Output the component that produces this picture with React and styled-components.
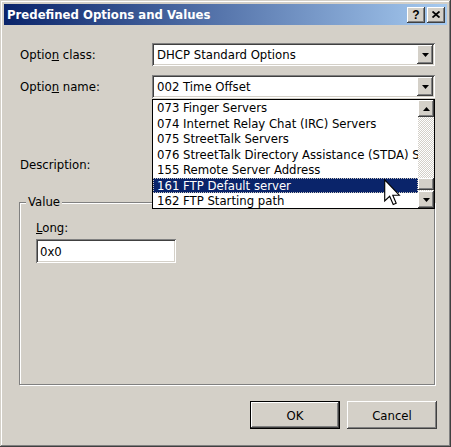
import React from "react";
import styled, { createGlobalStyle, css } from "styled-components";

const GlobalStyle = createGlobalStyle`
  html, body {
    margin: 0;
    padding: 0;
    background: #d4d0c8;
  }
  body {
    font-family: "DejaVu Sans Condensed", "DejaVu Sans", sans-serif;
    font-stretch: condensed;
    font-size: 13px;
    color: #000;
  }
`;

const raised = css`
  background: #d4d0c8;
  box-shadow: inset -1px -1px #404040, inset 1px 1px #ffffff,
    inset -2px -2px #808080, inset 2px 2px #d4d0c8;
`;

const sunken = css`
  box-shadow: inset 1px 1px #808080, inset -1px -1px #ffffff,
    inset 2px 2px #404040, inset -2px -2px #d4d0c8;
`;

const Window = styled.div`
  width: 451px;
  height: 447px;
  box-sizing: border-box;
  padding: 4px;
  display: flex;
  flex-direction: column;
  background: #d4d0c8;
  box-shadow: inset -1px -1px #404040, inset 1px 1px #d4d0c8,
    inset -2px -2px #808080, inset 2px 2px #ffffff;
`;

const TitleBar = styled.div`
  height: 21px;
  display: flex;
  align-items: center;
  padding: 0 2px 0 3px;
  background: linear-gradient(to right, #0a246a, #a6caf0);
  color: #fff;
  font-weight: bold;
  font-size: 13px;
`;

const TitleButtons = styled.div`
  margin-left: auto;
  display: flex;
  gap: 2px;
`;

const TitleButton = styled.div`
  ${raised};
  width: 18px;
  height: 16px;
  display: flex;
  align-items: center;
  justify-content: center;
  color: #000;
  font-family: "Liberation Sans", sans-serif;
  font-weight: bold;
  font-size: 12px;
  line-height: 1;
`;

const Body = styled.div`
  position: relative;
  flex: 1;
  display: flex;
  flex-direction: column;
  padding: 18px 10px 0 16px;
`;

const FieldGrid = styled.div`
  display: grid;
  grid-template-columns: 132px 283px;
  row-gap: 9px;
  align-items: center;
`;

const Label = styled.div`
  line-height: 16px;
  white-space: nowrap;
  margin-top: ${(p) => p.$offset || 0}px;
`;

const Combo = styled.div`
  ${sunken};
  background: #fff;
  height: 23px;
  box-sizing: border-box;
  padding: 2px;
  display: flex;
  align-items: center;
`;

const ComboText = styled.div`
  flex: 1;
  padding-left: 3px;
  white-space: nowrap;
  overflow: hidden;
`;

const ArrowButton = styled.div`
  ${raised};
  width: 16px;
  height: ${(p) => p.$h || 19}px;
  flex-shrink: 0;
  display: flex;
  align-items: center;
  justify-content: center;
`;

const DropList = styled.div`
  position: absolute;
  top: 74px;
  left: 148px;
  width: 283px;
  height: 110px;
  box-sizing: border-box;
  border: 1px solid #000;
  background: #fff;
  display: flex;
`;

const Items = styled.div`
  flex: 1;
  overflow: hidden;
`;

const Item = styled.div`
  height: 15.5px;
  line-height: 15.5px;
  padding-left: 4px;
  white-space: nowrap;
  overflow: hidden;
  ${(p) =>
    p.$selected &&
    css`
      background: #0a246a;
      color: #fff;
      outline: 1px dotted #c8c4bc;
      outline-offset: -1px;
    `}
`;

const ScrollBar = styled.div`
  width: 16px;
  display: flex;
  flex-direction: column;
`;

const Track = styled.div`
  flex: 1;
  display: flex;
  flex-direction: column;
  justify-content: flex-end;
  padding-bottom: 1px;
  background: repeating-conic-gradient(#ffffff 0 25%, #d4d0c8 0 50%) 0 0 / 2px
    2px;
`;

const Thumb = styled.div`
  ${raised};
  height: 12px;
`;

const Group = styled.div`
  position: relative;
  margin: 29px 0 0 -1px;
  width: 416px;
  height: 183px;
  box-sizing: border-box;
  border: 1px solid #808080;
  box-shadow: 1px 1px 0 #ffffff, inset 1px 1px 0 #ffffff;
  padding: 17px 16px;
`;

const Legend = styled.span`
  position: absolute;
  top: -9px;
  left: 6px;
  padding: 0 2px;
  line-height: 16px;
  background: #d4d0c8;
`;

const TextBox = styled.div`
  ${sunken};
  background: #fff;
  width: 140px;
  height: 24px;
  box-sizing: border-box;
  margin-top: 3px;
  padding-left: 4px;
  display: flex;
  align-items: center;
`;

const ButtonRow = styled.div`
  display: flex;
  justify-content: flex-end;
  gap: 7px;
  margin-top: 16px;
`;

const Button = styled.button`
  ${raised};
  width: 90px;
  height: 28px;
  border: none;
  padding: 0;
  font: inherit;
  color: #000;
  ${(p) =>
    p.$default &&
    css`
      border: 1px solid #000;
      box-shadow: inset -1px -1px #404040, inset 1px 1px #ffffff,
        inset -2px -2px #808080;
    `}
`;

const Cursor = styled.svg`
  position: absolute;
  left: 380px;
  top: 154px;
`;

const Arrow = ({ up }) => (
  <svg width="7" height="4" viewBox="0 0 7 4">
    <path d={up ? "M3.5 0 L7 4 L0 4 Z" : "M0 0 L7 0 L3.5 4 Z"} fill="#000" />
  </svg>
);

const items = [
  "073 Finger Servers",
  "074 Internet Relay Chat (IRC) Servers",
  "075 StreetTalk Servers",
  "076 StreetTalk Directory Assistance (STDA) Servers",
  "155 Remote Server Address",
  "161 FTP Default server",
  "162 FTP Starting path",
];

export default function App() {
  return (
    <>
      <GlobalStyle />
      <Window>
        <TitleBar>
          Predefined Options and Values
          <TitleButtons>
            <TitleButton>?</TitleButton>
            <TitleButton>
              <svg width="8" height="7" viewBox="0 0 8 7">
                <path d="M0.5 0.5 L7.5 6.5 M7.5 0.5 L0.5 6.5" stroke="#000" strokeWidth="1.8" />
              </svg>
            </TitleButton>
          </TitleButtons>
        </TitleBar>
        <Body>
          <FieldGrid>
            <Label>
              Optio<u>n</u> class:
            </Label>
            <Combo>
              <ComboText>DHCP Standard Options</ComboText>
              <ArrowButton>
                <Arrow />
              </ArrowButton>
            </Combo>
            <Label>
              Optio<u>n</u> name:
            </Label>
            <Combo>
              <ComboText>002 Time Offset</ComboText>
              <ArrowButton>
                <Arrow />
              </ArrowButton>
            </Combo>
            <Label $offset={50}>Description:</Label>
            <div />
          </FieldGrid>

          <Group>
            <Legend>Value</Legend>
            <Label>
              <u>L</u>ong:
            </Label>
            <TextBox>0x0</TextBox>
          </Group>

          <ButtonRow>
            <Button $default>OK</Button>
            <Button>Cancel</Button>
          </ButtonRow>

          <DropList>
            <Items>
              {items.map((t) => (
                <Item key={t} $selected={t.startsWith("161")}>
                  {t}
                </Item>
              ))}
            </Items>
            <ScrollBar>
              <ArrowButton $h={17}>
                <Arrow up />
              </ArrowButton>
              <Track>
                <Thumb />
              </Track>
              <ArrowButton $h={17}>
                <Arrow />
              </ArrowButton>
            </ScrollBar>
          </DropList>

          <Cursor width="17" height="27" viewBox="0 0 12 19">
            <path
              d="M0.5 0.5 L0.5 15.5 L4 12.2 L6.5 18 L8.6 17.1 L6.2 11.4 L10.8 11.4 Z"
              fill="#fff"
              stroke="#000"
              strokeWidth="0.8"
              strokeLinejoin="miter"
            />
          </Cursor>
        </Body>
      </Window>
    </>
  );
}
